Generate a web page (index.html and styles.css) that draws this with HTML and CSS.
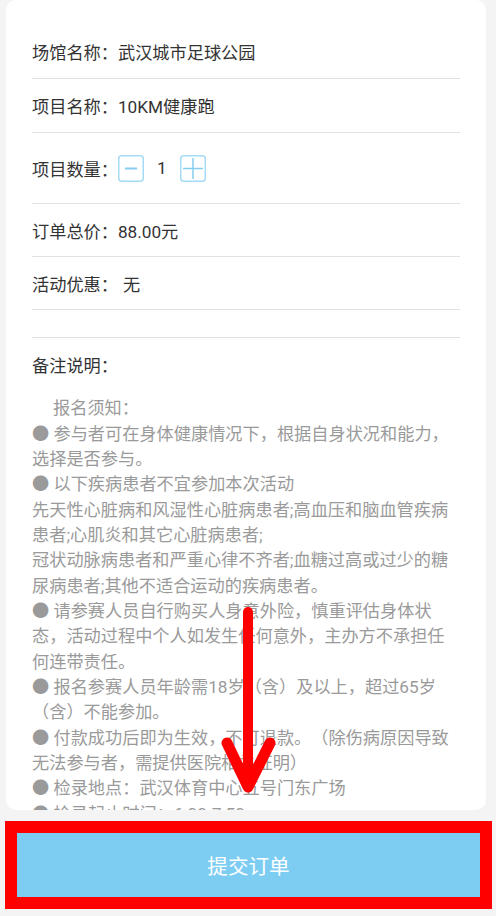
FILE: index.html
```html
<!DOCTYPE html>
<html lang="zh-CN">
<head>
<meta charset="utf-8">
<title>提交订单</title>
<link rel="stylesheet" href="styles.css">
</head>
<body>
<div class="page">
  <div class="card">
    <div class="row r1"><span class="label">场馆名称：</span><span class="value">武汉城市足球公园</span></div>
    <div class="row r2"><span class="label">项目名称：</span><span class="value">10KM健康跑</span></div>
    <div class="row r3">
      <span class="label">项目数量：</span>
      <span class="qty-btn">
        <svg width="26" height="27" viewBox="0 0 26 27"><rect x="0.75" y="0.75" width="24.5" height="25.5" rx="3" fill="none" stroke="#a6dbf5" stroke-width="1.5"/><line x1="7" y1="13.5" x2="19" y2="13.5" stroke="#86cdf1" stroke-width="1.8"/></svg>
      </span>
      <span class="qty-num">1</span>
      <span class="qty-btn">
        <svg width="26" height="27" viewBox="0 0 26 27"><rect x="0.75" y="0.75" width="24.5" height="25.5" rx="3" fill="none" stroke="#a6dbf5" stroke-width="1.5"/><line x1="3" y1="13.5" x2="23" y2="13.5" stroke="#86cdf1" stroke-width="1.5"/><line x1="13" y1="3" x2="13" y2="24" stroke="#86cdf1" stroke-width="1.5"/></svg>
      </span>
    </div>
    <div class="row r4"><span class="label">订单总价：</span><span class="value">88.00元</span></div>
    <div class="row r5"><span class="label">活动优惠：</span><span class="value gap">无</span></div>
    <div class="row r6"></div>
    <div class="notes-title">备注说明：</div>
    <div class="notes">
      <div class="line indent">报名须知：</div>
      <div class="line">● 参与者可在身体健康情况下，根据自身状况和能力，</div>
      <div class="line">选择是否参与。</div>
      <div class="line">● 以下疾病患者不宜参加本次活动</div>
      <div class="line">先天性心脏病和风湿性心脏病患者;高血压和脑血管疾病</div>
      <div class="line">患者;心肌炎和其它心脏病患者;</div>
      <div class="line">冠状动脉病患者和严重心律不齐者;血糖过高或过少的糖</div>
      <div class="line">尿病患者;其他不适合运动的疾病患者。</div>
      <div class="line">● 请参赛人员自行购买人身意外险，慎重评估身体状</div>
      <div class="line">态，活动过程中个人如发生任何意外，主办方不承担任</div>
      <div class="line">何连带责任。</div>
      <div class="line">● 报名参赛人员年龄需18岁（含）及以上，超过65岁</div>
      <div class="line">（含）不能参加。</div>
      <div class="line">● 付款成功后即为生效，不可退款。（除伤病原因导致</div>
      <div class="line">无法参与者，需提供医院相关证明）</div>
      <div class="line">● 检录地点：武汉体育中心五号门东广场</div>
      <div class="line">● 检录起止时间：6:00-7:50</div>
    </div>
  </div>
  <div class="submit-frame"><button class="submit" type="button">提交订单</button></div>
</div>
<svg class="arrow" width="496" height="916" viewBox="0 0 496 916">
  <line x1="248" y1="612" x2="248" y2="784" stroke="#ff0000" stroke-width="10" stroke-linecap="round"/>
  <polyline points="227,743 248,787 270,743" fill="none" stroke="#ff0000" stroke-width="11" stroke-linecap="round" stroke-linejoin="round"/>
</svg>
</body>
</html>
```

FILE: styles.css
```css
html, body {
  margin: 0;
  padding: 0;
}
body {
  background: #f4f4f4;
  font-family: Roboto, "Noto Sans CJK SC", sans-serif;
  width: 496px;
  height: 916px;
  overflow: hidden;
  position: relative;
  text-spacing-trim: space-all;
}
.page {
  display: flex;
  flex-direction: column;
}
.card {
  margin-left: 6px;
  width: 480px;
  height: 810px;
  box-sizing: border-box;
  background: #ffffff;
  border-radius: 10px;
  padding: 25px 26px 0;
  overflow: hidden;
  display: flex;
  flex-direction: column;
}
.row {
  display: flex;
  align-items: center;
  box-sizing: border-box;
  border-bottom: 1px solid #e2e2e2;
  font-size: 17.2px;
  color: #333333;
  flex-shrink: 0;
}
.r1 { height: 54px; }
.r2 { height: 54px; }
.r3 { height: 71px; }
.r4 { height: 53px; }
.r5 { height: 53px; }
.r6 { height: 28px; }
.value.gap { margin-left: 5px; }
.qty-btn {
  display: flex;
  width: 26px;
  height: 27px;
}
.qty-num {
  width: 36px;
  text-align: center;
  font-size: 17.2px;
  color: #333333;
}
.notes-title {
  padding-top: 16px;
  font-size: 17.2px;
  line-height: 25.33px;
  color: #333333;
  flex-shrink: 0;
}
.notes {
  margin-top: 17px;
  font-size: 17.2px;
  line-height: 25.33px;
  color: #9a9a9a;
  white-space: nowrap;
}
.line.indent {
  padding-left: 21px;
}
.submit-frame {
  margin: 11px 4px 0 5px;
  border: 12px solid #ff0000;
  display: flex;
}
.submit {
  flex: 1;
  height: 64px;
  border: none;
  margin: 0;
  padding: 0;
  background: #7dcdf3;
  color: #ffffff;
  font-family: Roboto, "Noto Sans CJK SC", sans-serif;
  font-size: 20.6px;
}
.arrow {
  position: absolute;
  left: 0;
  top: 0;
  pointer-events: none;
}
```
